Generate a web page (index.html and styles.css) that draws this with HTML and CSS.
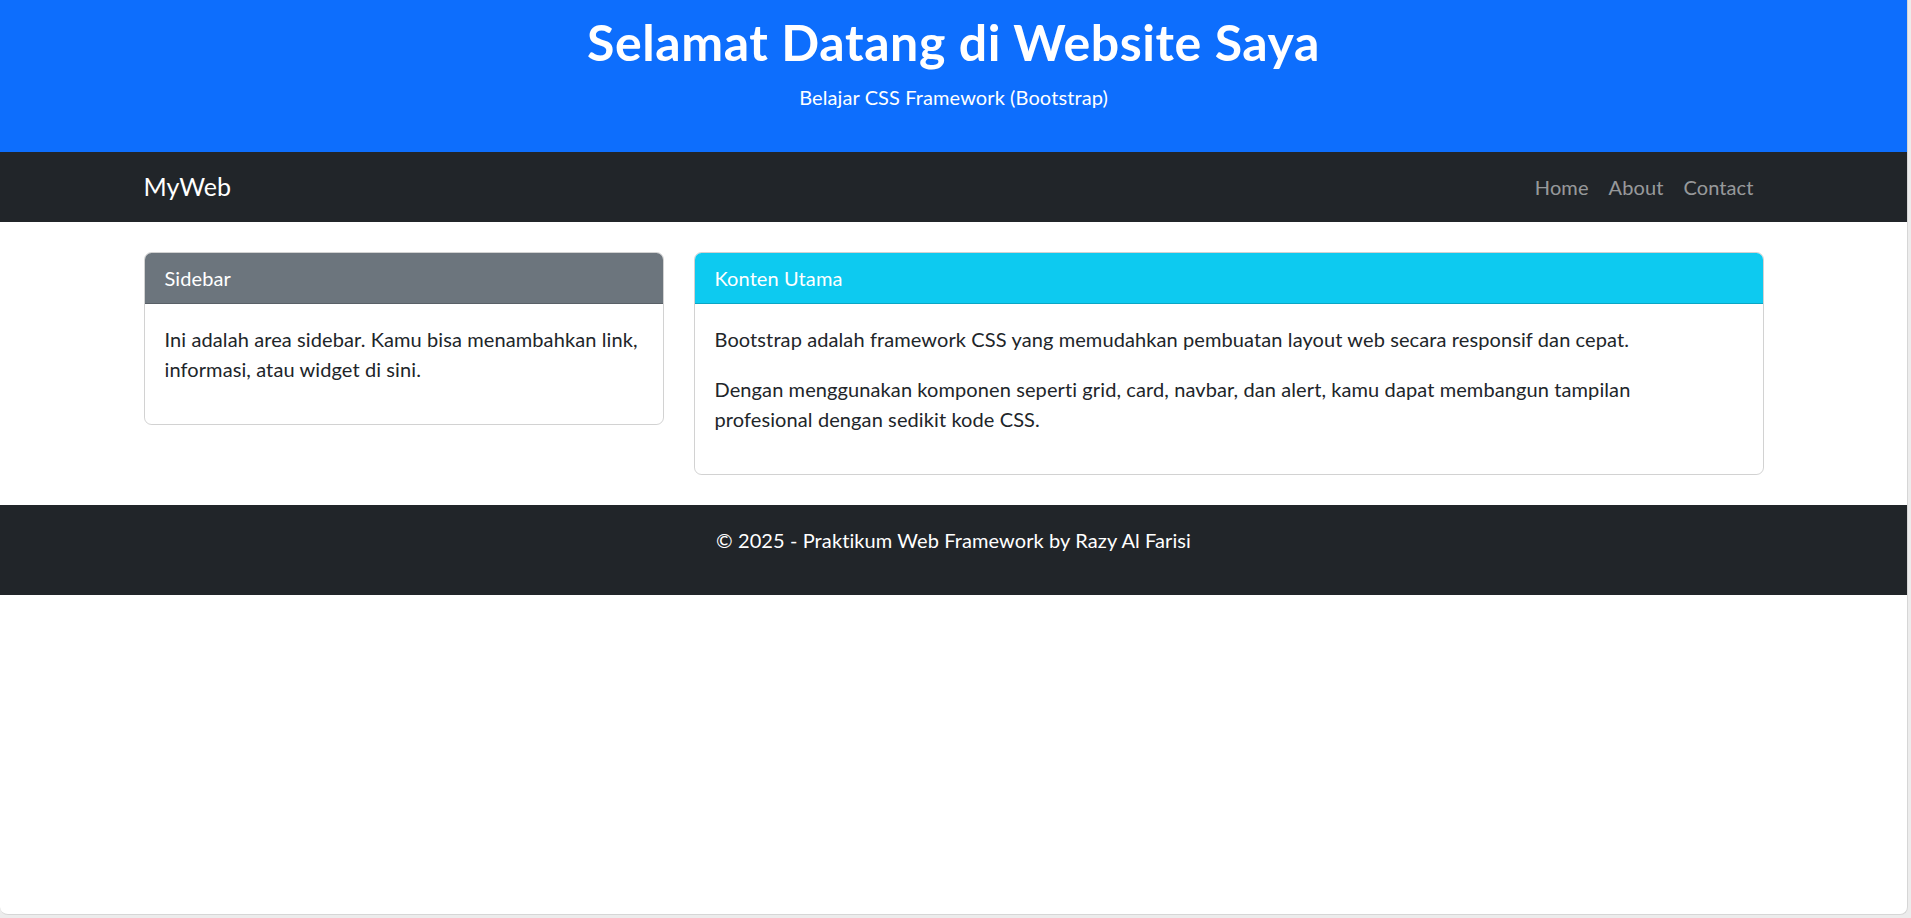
FILE: index.html
```html
<!DOCTYPE html>
<html lang="id">
<head>
<meta charset="utf-8">
<title>Website Saya</title>
<link rel="stylesheet" href="styles.css">
</head>
<body>
<div class="frame">
  <header class="hero">
    <h1 class="hero-title">Selamat Datang di Website Saya</h1>
    <p class="hero-sub">Belajar CSS Framework (Bootstrap)</p>
  </header>
  <nav class="navbar">
    <div class="container nav-inner">
      <a class="brand" href="#">MyWeb</a>
      <ul class="nav-links">
        <li><a href="#">Home</a></li>
        <li><a href="#">About</a></li>
        <li><a href="#">Contact</a></li>
      </ul>
    </div>
  </nav>
  <main class="container content">
    <section class="card">
      <div class="card-header header-secondary">Sidebar</div>
      <div class="card-body">
        <p>Ini adalah area sidebar. Kamu bisa menambahkan link, informasi, atau widget di sini.</p>
      </div>
    </section>
    <section class="card">
      <div class="card-header header-info">Konten Utama</div>
      <div class="card-body">
        <p>Bootstrap adalah framework CSS yang memudahkan pembuatan layout web secara responsif dan cepat.</p>
        <p>Dengan menggunakan komponen seperti grid, card, navbar, dan alert, kamu dapat membangun tampilan<br>profesional dengan sedikit kode CSS.</p>
      </div>
    </section>
  </main>
  <footer class="footer">
    <p>© 2025 - Praktikum Web Framework by Razy Al Farisi</p>
  </footer>
</div>
</body>
</html>
```
FILE: styles.css
```css
* { box-sizing: border-box; }
html, body { margin: 0; padding: 0; }
body {
  background: #ececec;
  font-family: Lato, "Noto Sans", sans-serif;
  font-size: 20px;
  line-height: 1.5;
  letter-spacing: 0.1px;
  color: #212529;
}
.frame {
  width: 1908px;
  height: 915px;
  background: #fff;
  border-right: 1px solid #d6d6d6;
  border-bottom: 1px solid #d6d6d6;
  border-bottom-right-radius: 8px;
  border-bottom-left-radius: 8px;
  overflow: hidden;
}
.hero {
  background: #0d6efd;
  color: #fff;
  text-align: center;
  padding: 12px 0 20px;
}
.hero-title {
  margin: 0 0 10px;
  font-size: 50px;
  line-height: 60px;
  font-weight: 700;
  letter-spacing: 0.6px;
}
.hero-sub { margin: 0 0 20px; }
.container {
  width: 1650px;
  margin: 0 auto;
  padding: 0 15px;
}
.navbar {
  background: #212529;
  padding: 10px 0;
}
.nav-inner {
  display: flex;
  align-items: center;
  justify-content: space-between;
}
.brand {
  color: #fff;
  text-decoration: none;
  font-size: 25px;
  line-height: 37.5px;
  padding: 6.25px 0;
}
.nav-links {
  list-style: none;
  display: flex;
  margin: 0;
  padding: 0;
}
.nav-links a {
  display: block;
  padding: 10px;
  color: rgba(255,255,255,.55);
  text-decoration: none;
}
.content {
  display: grid;
  grid-template-columns: 520px 1fr;
  column-gap: 30px;
  align-items: start;
  margin-top: 30px;
  margin-bottom: 30px;
}
.card {
  border: 1px solid rgba(0,0,0,.175);
  border-radius: 7.5px;
  overflow: hidden;
}
.card-header {
  padding: 10px 20px;
  color: #fff;
  border-bottom: 1px solid rgba(0,0,0,.175);
}
.header-secondary { background: #6c757d; }
.header-info { background: #0dcaf0; }
.card-body { padding: 20px; }
.card-body p { margin: 0 0 20px; }
.footer {
  background: #212529;
  color: #fff;
  text-align: center;
  padding: 20px 0;
}
.footer p { margin: 0 0 20px; }
```
